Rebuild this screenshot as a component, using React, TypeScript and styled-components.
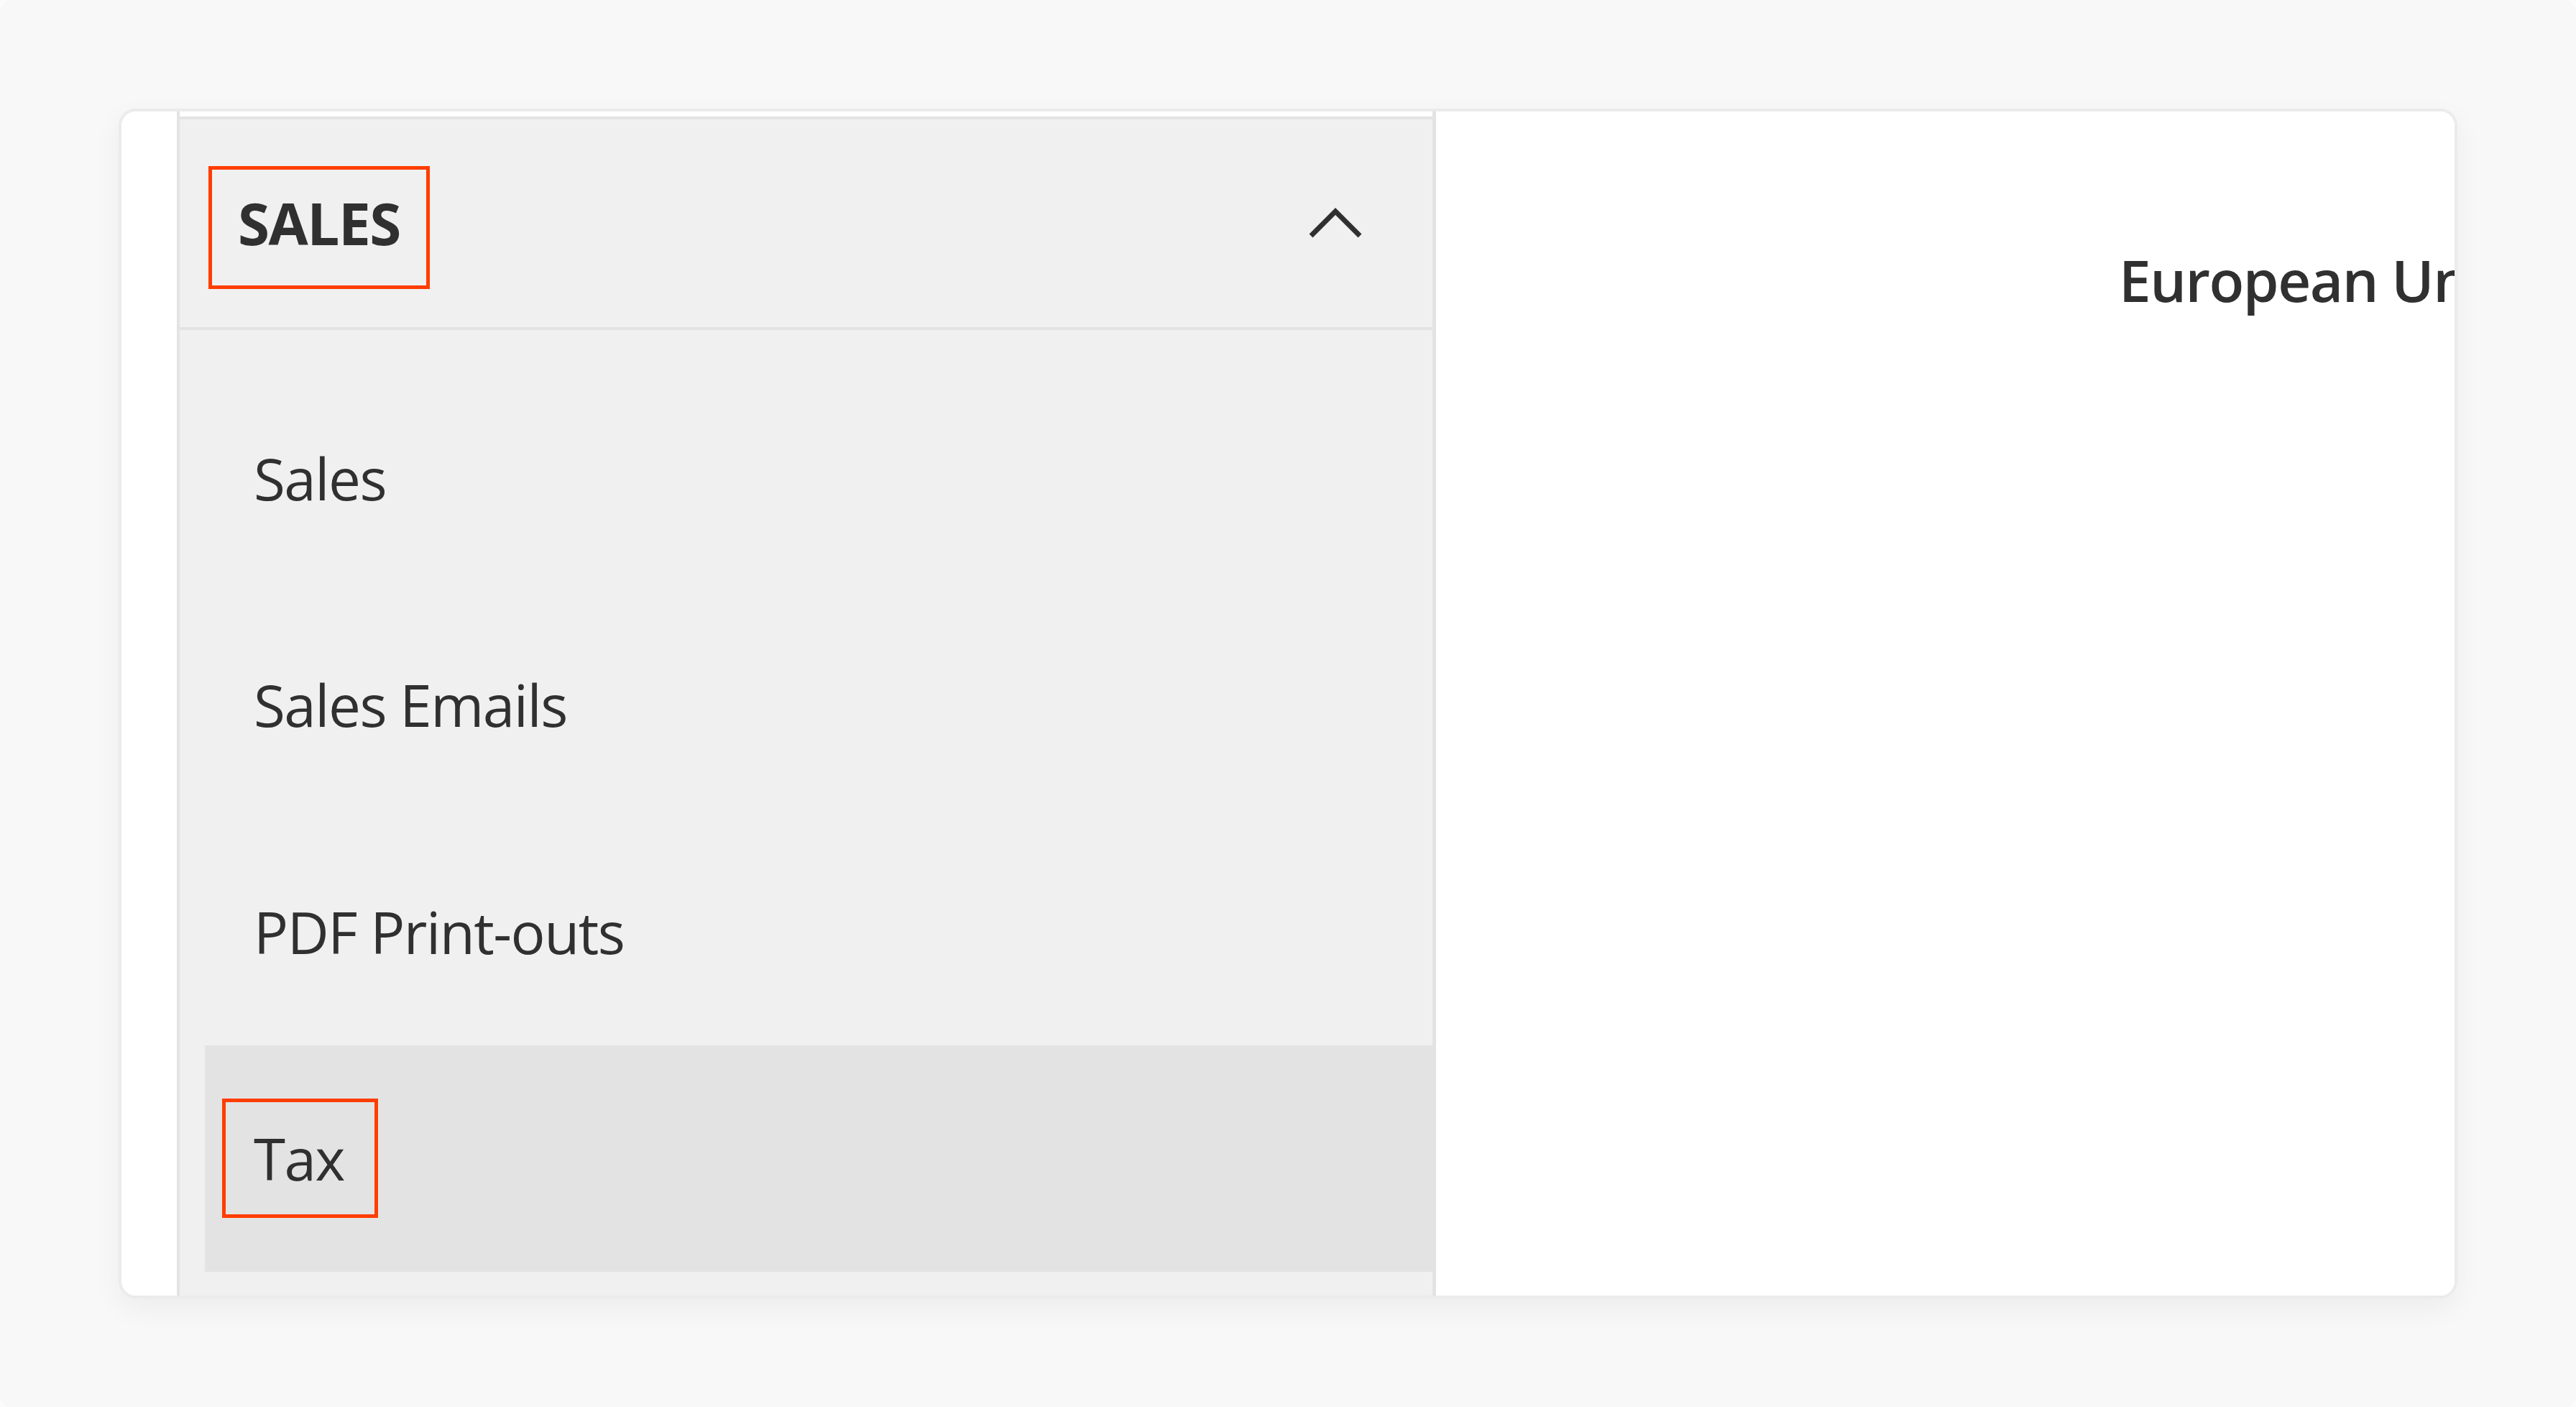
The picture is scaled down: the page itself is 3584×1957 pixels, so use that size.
import React from "react";
import styled, { createGlobalStyle } from "styled-components";

const Global = createGlobalStyle`
  html, body {
    margin: 0;
    padding: 0;
    background: #fbfbfb;
  }
  * { box-sizing: border-box; }
`;

const Page = styled.div`
  height: 1957px;
  padding: 151px 165px;
  background: #f8f8f8;
  border-radius: 16px;
  font-family: "Open Sans", "Liberation Sans", sans-serif;
  color: #303030;
`;

const Card = styled.div`
  display: flex;
  height: 100%;
  background: #ffffff;
  border: 4px solid #ebebeb;
  border-radius: 24px;
  overflow: hidden;
  box-shadow: 0 14px 40px rgba(0, 0, 0, 0.05);
`;

const Gutter = styled.div`
  width: 77px;
  flex: none;
`;

const Sidebar = styled.aside`
  width: 1752px;
  flex: none;
  display: flex;
  flex-direction: column;
  border-left: 4px solid #e3e3e3;
  border-right: 5px solid #e3e3e3;
  background: #ffffff;
`;

const Nav = styled.nav`
  flex: 1;
  margin-top: 7px;
  border-top: 4px solid #e3e3e3;
  background: #f0f0f0;
  display: flex;
  flex-direction: column;
`;

const Header = styled.div`
  display: flex;
  align-items: flex-start;
  justify-content: space-between;
  padding: 65px 97px 53px 40px;
  border-bottom: 4px solid #e3e3e3;
`;

const Title = styled.span`
  display: inline-block;
  border: 5px solid #ff3d00;
  padding: 34px 36px 47px 36px;
  font-size: 80px;
  line-height: 80px;
  font-weight: 700;
  letter-spacing: -1.5px;
  color: #303030;
  white-space: nowrap;
`;

const Chevron = styled.svg`
  display: block;
  margin-top: 57px;
  flex: none;
`;

const List = styled.ul`
  list-style: none;
  margin: 0;
  padding: 48px 0 29px 35px;
  display: flex;
  flex-direction: column;
`;

const Item = styled.li<{ $active?: boolean }>`
  height: 315.5px;
  display: flex;
  align-items: center;
  padding-left: 24px;
  background: ${(p) => (p.$active ? "#e3e3e3" : "transparent")};
`;

const Label = styled.span<{ $marked?: boolean }>`
  display: inline-block;
  border: 5px solid ${(p) => (p.$marked ? "#ff3d00" : "transparent")};
  padding: 38px 42px 38px 39px;
  font-size: 80px;
  line-height: 80px;
  font-weight: 400;
  letter-spacing: -1.5px;
  color: #303030;
  white-space: nowrap;
`;

const Main = styled.main`
  flex: 1;
  min-width: 0;
  padding: 193.5px 0 0 950px;
  background: #ffffff;
`;

const FieldLabel = styled.div`
  font-size: 80px;
  line-height: 80px;
  font-weight: 600;
  letter-spacing: -1.5px;
  color: #303030;
  white-space: nowrap;
`;

const items = [
  { label: "Sales" },
  { label: "Sales Emails" },
  { label: "PDF Print-outs" },
  { label: "Tax", active: true, marked: true },
];

export default function App() {
  return (
    <>
      <Global />
      <Page>
        <Card>
          <Gutter />
          <Sidebar>
            <Nav>
              <Header>
                <Title>SALES</Title>
                <Chevron width="76" height="44" viewBox="0 0 76 44">
                  <polyline
                    points="4,40 38,6 72,40"
                    fill="none"
                    stroke="#303030"
                    strokeWidth="7"
                    strokeLinejoin="miter"
                  />
                </Chevron>
              </Header>
              <List>
                {items.map((it) => (
                  <Item key={it.label} $active={it.active}>
                    <Label $marked={it.marked}>{it.label}</Label>
                  </Item>
                ))}
              </List>
            </Nav>
          </Sidebar>
          <Main>
            <FieldLabel>European Union Countries</FieldLabel>
          </Main>
        </Card>
      </Page>
    </>
  );
}
